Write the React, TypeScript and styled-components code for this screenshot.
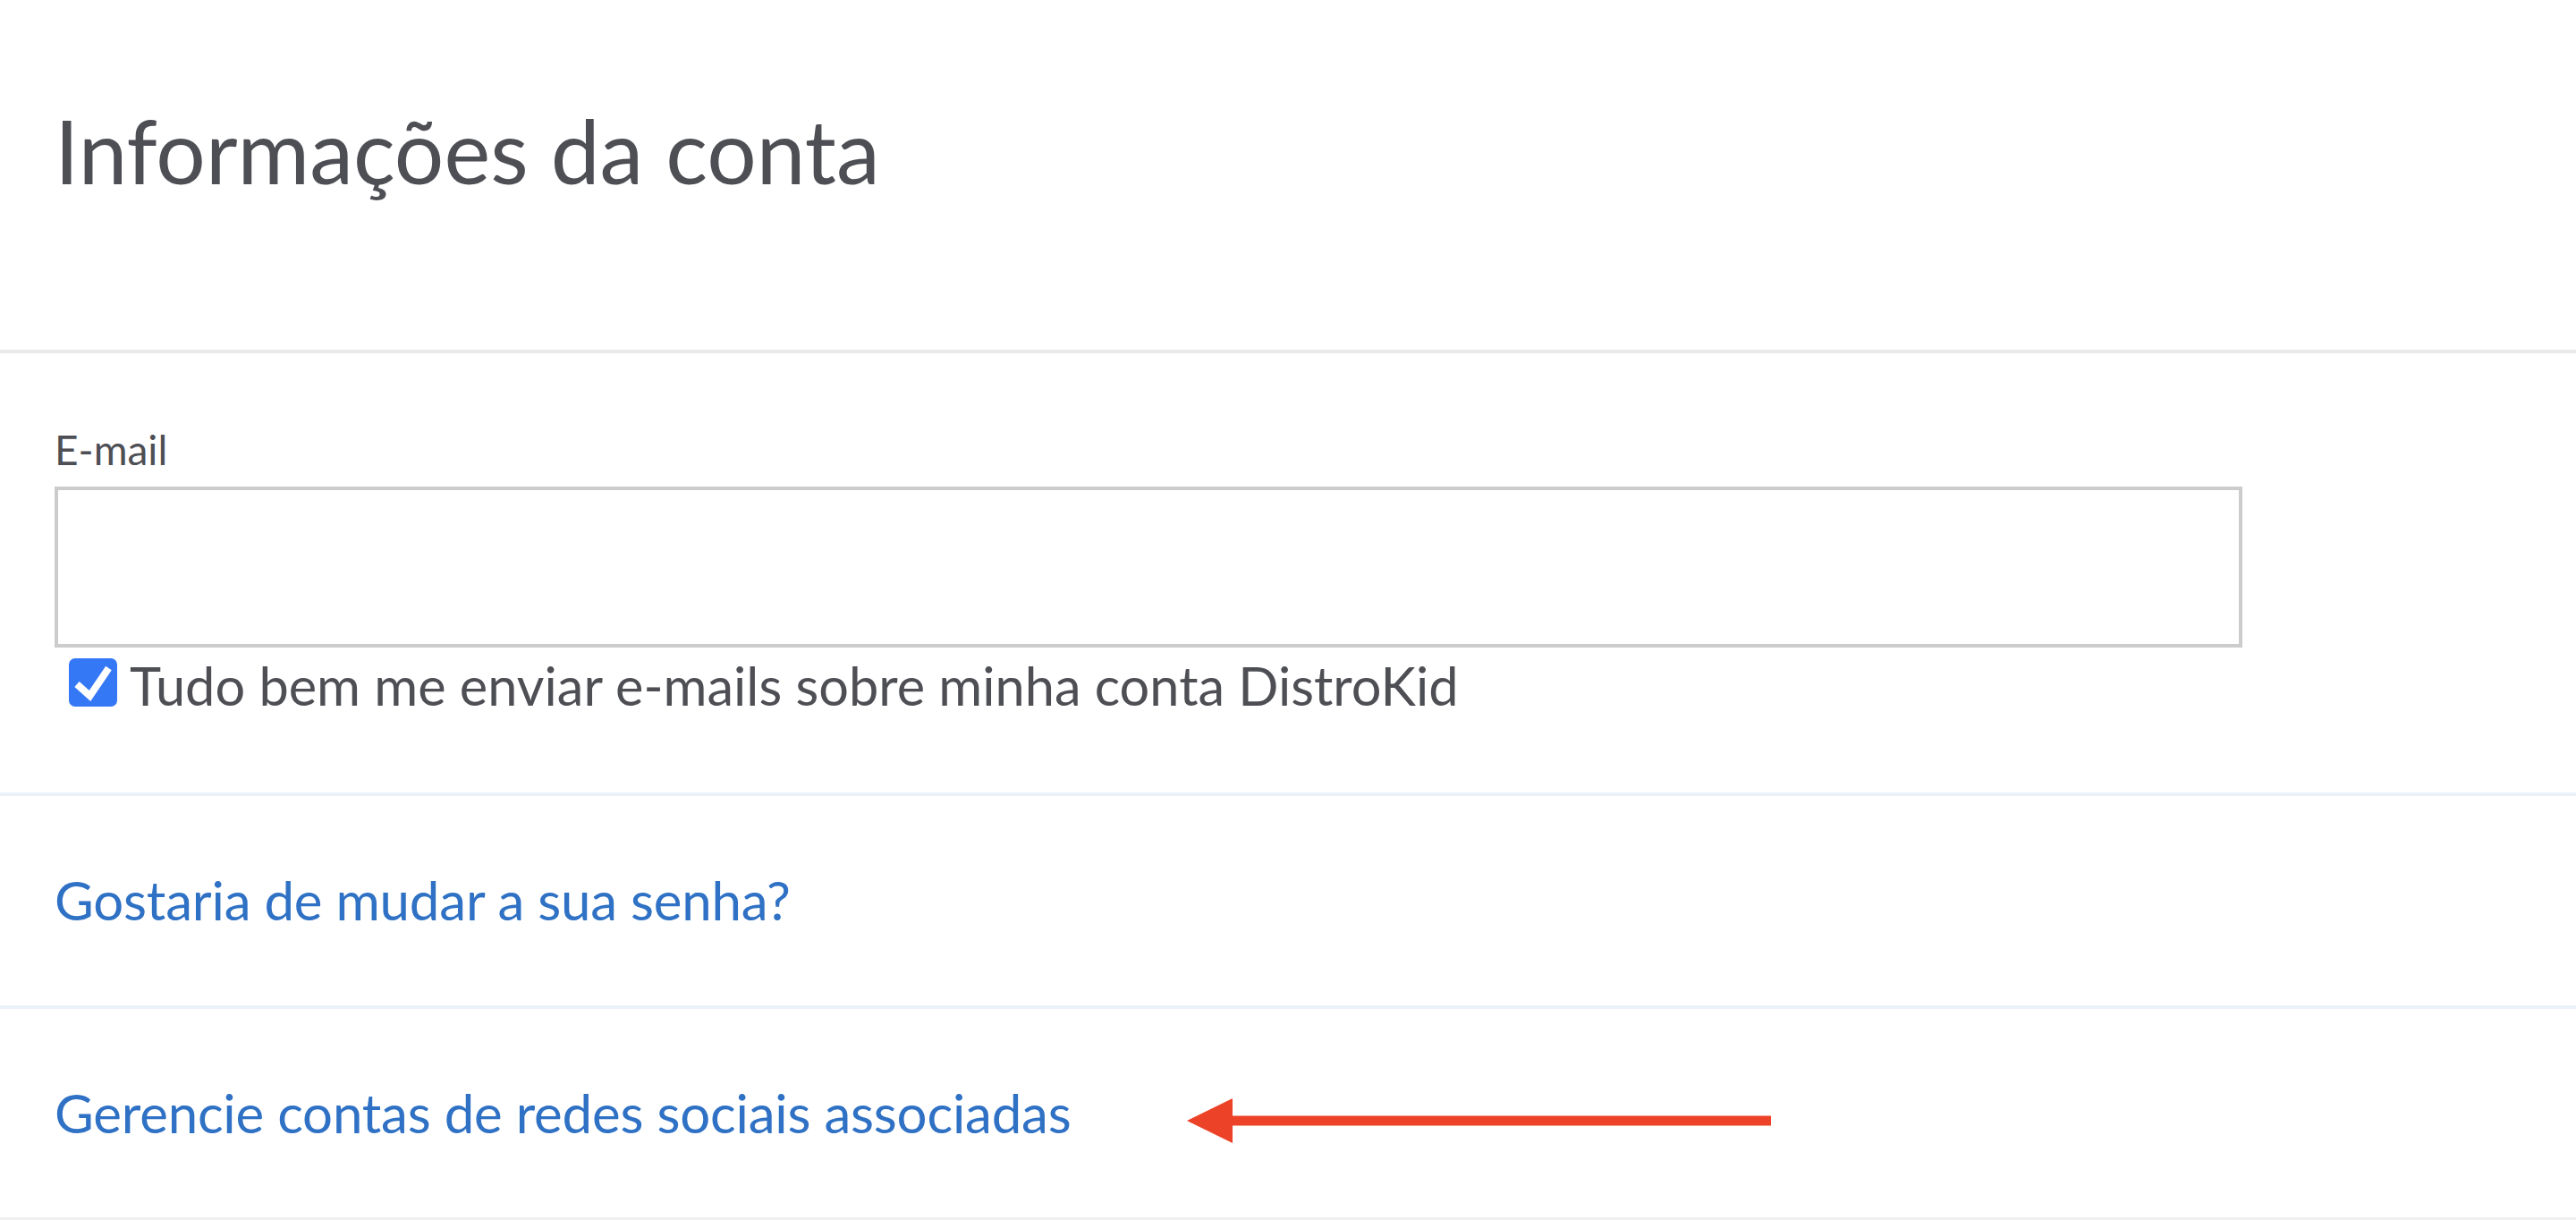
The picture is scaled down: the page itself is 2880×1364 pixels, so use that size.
import React from 'react';
import styled, { createGlobalStyle } from 'styled-components';

const GlobalStyle = createGlobalStyle`
  html, body {
    margin: 0;
    padding: 0;
    background: #ffffff;
  }
  body {
    font-family: Lato, "Open Sans", "Liberation Sans", sans-serif;
    color: #4e4f55;
  }
  * {
    box-sizing: border-box;
  }
`;

const Page = styled.div`
  width: 100%;
  min-height: 1364px;
  display: flex;
  flex-direction: column;
`;

const Header = styled.header`
  padding: 110px 61px 0;
  height: 395px;
  border-bottom: 4px solid #e9e9e9;
`;

const Title = styled.h1`
  margin: 0;
  font-size: 98px;
  font-weight: 400;
  line-height: 1.2;
  color: #4e4f55;
`;

const Section = styled.section<{ $top?: number; $bottom?: number; $line?: string }>`
  padding: ${(p) => p.$top ?? 80}px 61px ${(p) => p.$bottom ?? 80}px;
  border-bottom: 4px solid ${(p) => p.$line ?? '#ebf1f8'};
`;

const Label = styled.label`
  display: block;
  font-size: 46px;
  line-height: 55px;
  color: #4e4f55;
  margin-bottom: 14px;
`;

const EmailInput = styled.input`
  display: block;
  width: 2446px;
  height: 180px;
  border: 4px solid #cccccc;
  background: #ffffff;
  outline: none;
  padding: 0 20px;
  font-family: inherit;
  font-size: 56px;
  color: #4e4f55;
`;

const CheckRow = styled.label`
  display: flex;
  align-items: center;
  gap: 14px;
  margin-top: 6px;
  padding-left: 16px;
  font-size: 59.5px;
  line-height: 72px;
  color: #4e4f55;
`;

const CheckBox = styled.span`
  width: 54px;
  height: 54px;
  flex: none;
  border-radius: 7px;
  background: #3478f6;
  display: flex;
  align-items: center;
  justify-content: center;
  margin-top: -6px;
`;

const LinkRow = styled.div`
  display: flex;
  align-items: center;
`;

const Link = styled.a`
  font-size: 60px;
  letter-spacing: -0.2px;
  line-height: 73px;
  color: #2f71c4;
  text-decoration: none;
  cursor: pointer;
`;

const Arrow = styled.svg`
  margin-left: 129px;
  margin-top: 16px;
  flex: none;
`;

const Check = () => (
  <svg width="54" height="54" viewBox="0 0 54 54">
    <path d="M9 29 L23.5 42 L44.5 11" fill="none" stroke="#ffffff" strokeWidth="8" strokeLinejoin="miter" />
  </svg>
);

export default function App() {
  return (
    <Page>
      <GlobalStyle />
      <Header>
        <Title>Informações da conta</Title>
      </Header>
      <Section $top={80} $bottom={84}>
        <Label htmlFor="email">E-mail</Label>
        <EmailInput id="email" type="email" />
        <CheckRow>
          <CheckBox>
            <Check />
          </CheckBox>
          Tudo bem me enviar e-mails sobre minha conta DistroKid
        </CheckRow>
      </Section>
      <Section $top={80} $bottom={81}>
        <LinkRow>
          <Link>Gostaria de mudar a sua senha?</Link>
        </LinkRow>
      </Section>
      <Section $top={80} $bottom={80} $line="#f0f0f0">
        <LinkRow>
          <Link>Gerencie contas de redes sociais associadas</Link>
          <Arrow width="653" height="50" viewBox="0 0 653 50">
            <polygon points="0,25 51,0 51,50" fill="#ec4227" />
            <rect x="50" y="19.5" width="603" height="11" fill="#ec4227" />
          </Arrow>
        </LinkRow>
      </Section>
    </Page>
  );
}
